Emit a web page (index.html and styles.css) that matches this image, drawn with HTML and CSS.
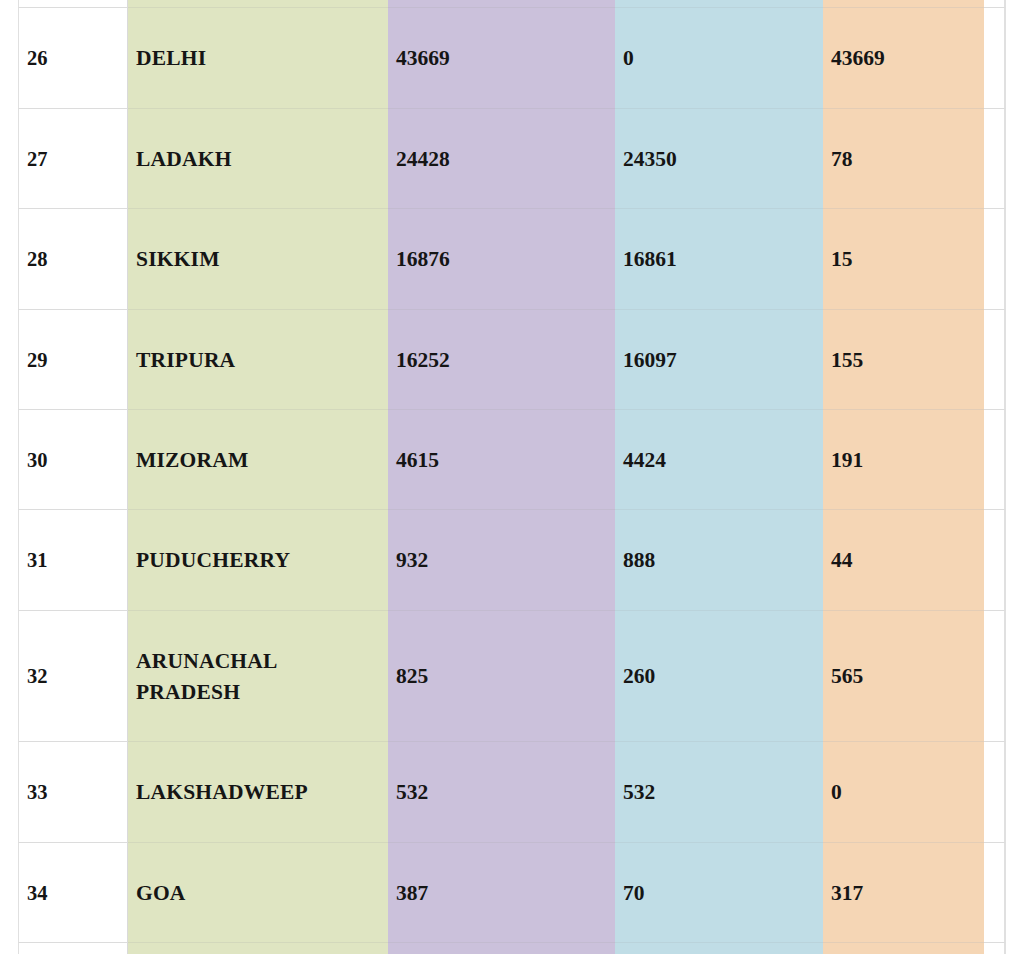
FILE: index.html
```html
<!DOCTYPE html>
<html>
<head>
<meta charset="utf-8">
<link rel="stylesheet" href="styles.css">
</head>
<body>
<table class="states">
  <colgroup>
    <col class="c-n"><col class="c-s"><col class="c-a"><col class="c-b"><col class="c-c"><col class="c-e">
  </colgroup>
  <tbody>
    <tr><td class="n"></td><td class="s"></td><td class="a"></td><td class="b"></td><td class="c"></td><td class="e"></td></tr>
    <tr><td class="n">26</td><td class="s">DELHI</td><td class="a">43669</td><td class="b">0</td><td class="c">43669</td><td class="e"></td></tr>
    <tr><td class="n">27</td><td class="s">LADAKH</td><td class="a">24428</td><td class="b">24350</td><td class="c">78</td><td class="e"></td></tr>
    <tr><td class="n">28</td><td class="s">SIKKIM</td><td class="a">16876</td><td class="b">16861</td><td class="c">15</td><td class="e"></td></tr>
    <tr><td class="n">29</td><td class="s">TRIPURA</td><td class="a">16252</td><td class="b">16097</td><td class="c">155</td><td class="e"></td></tr>
    <tr><td class="n">30</td><td class="s">MIZORAM</td><td class="a">4615</td><td class="b">4424</td><td class="c">191</td><td class="e"></td></tr>
    <tr><td class="n">31</td><td class="s">PUDUCHERRY</td><td class="a">932</td><td class="b">888</td><td class="c">44</td><td class="e"></td></tr>
    <tr><td class="n">32</td><td class="s">ARUNACHAL<br>PRADESH</td><td class="a">825</td><td class="b">260</td><td class="c">565</td><td class="e"></td></tr>
    <tr><td class="n">33</td><td class="s">LAKSHADWEEP</td><td class="a">532</td><td class="b">532</td><td class="c">0</td><td class="e"></td></tr>
    <tr><td class="n">34</td><td class="s">GOA</td><td class="a">387</td><td class="b">70</td><td class="c">317</td><td class="e"></td></tr>
    <tr><td class="n"></td><td class="s"></td><td class="a"></td><td class="b"></td><td class="c"></td><td class="e"></td></tr>
  </tbody>
</table>
</body>
</html>
```

FILE: styles.css
```css
html, body {
  margin: 0;
  padding: 0;
  background: #ffffff;
  overflow: hidden;
}

.states {
  margin: -92px 0 0 18px;
  border-collapse: separate;
  border-spacing: 0;
  table-layout: fixed;
  width: 988px;
  font-family: "Liberation Serif", "Times New Roman", serif;
  font-weight: bold;
  font-size: 21.5px;
  color: #151515;
}

.c-n { width: 110px; }
.c-s { width: 260px; }
.c-a { width: 227px; }
.c-b { width: 208px; }
.c-c { width: 161px; }
.c-e { width: 22px; }

.states td {
  height: 31.4px;
  padding: 35px 8px 33px;
  line-height: 31.2px;
  vertical-align: middle;
  text-align: left;
  border-bottom: 1px solid #dcdcdc;
}

.states td.n {
  border-left: 1px solid #e0e0e0;
  border-right: 1px solid #dadada;
  font-size: 20.5px;
}

.states td.s { background: #dfe5c2; border-bottom-color: #d3d8bc; letter-spacing: 0.2px; }
.states td.a { background: #cbc1db; border-bottom-color: #c3bbd0; }
.states td.b { background: #c0dde6; border-bottom-color: #bad3db; }
.states td.c { background: #f5d6b5; border-bottom-color: #e3cdb6; }
.states td.e {
  padding: 0;
  border-right: 2px solid #e0e0e0;
}
```
